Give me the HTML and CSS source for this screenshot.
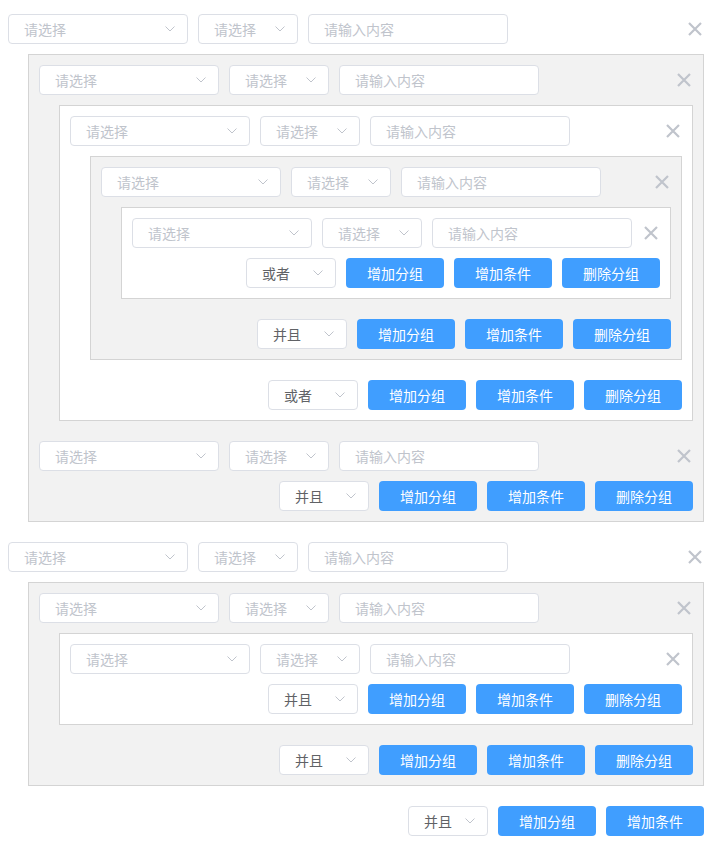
FILE: index.html
```html
<!DOCTYPE html>
<html lang="zh">
<head>
<meta charset="utf-8">
<title>条件分组</title>
<link rel="stylesheet" href="styles.css">
</head>
<body>
<svg width="0" height="0" class="defs">
  <defs>
    <symbol id="arrow" viewBox="0 0 10 6"><path d="M0.5 0.5 L5 5 L9.5 0.5" fill="none" stroke="#c0c4cc" stroke-width="1"/></symbol>
    <symbol id="close" viewBox="0 0 16 16"><path d="M2 2 L14 14 M14 2 L2 14" fill="none" stroke="#c0c4cc" stroke-width="2.2"/></symbol>
  </defs>
</svg>
<div class="root">
  <div class="cond">
    <div class="sel w180 ph"><span>请选择</span><svg class="arr"><use href="#arrow"/></svg></div>
    <div class="sel w100 ph"><span>请选择</span><svg class="arr"><use href="#arrow"/></svg></div>
    <div class="inp ph">请输入内容</div>
    <svg class="x"><use href="#close"/></svg>
  </div>

  <div class="group grey">
    <div class="cond">
      <div class="sel w180 ph"><span>请选择</span><svg class="arr"><use href="#arrow"/></svg></div>
      <div class="sel w100 ph"><span>请选择</span><svg class="arr"><use href="#arrow"/></svg></div>
      <div class="inp ph">请输入内容</div>
      <svg class="x"><use href="#close"/></svg>
    </div>
    <div class="group white">
      <div class="cond">
        <div class="sel w180 ph"><span>请选择</span><svg class="arr"><use href="#arrow"/></svg></div>
        <div class="sel w100 ph"><span>请选择</span><svg class="arr"><use href="#arrow"/></svg></div>
        <div class="inp ph">请输入内容</div>
        <svg class="x"><use href="#close"/></svg>
      </div>
      <div class="group grey">
        <div class="cond">
          <div class="sel w180 ph"><span>请选择</span><svg class="arr"><use href="#arrow"/></svg></div>
          <div class="sel w100 ph"><span>请选择</span><svg class="arr"><use href="#arrow"/></svg></div>
          <div class="inp ph">请输入内容</div>
          <svg class="x"><use href="#close"/></svg>
        </div>
        <div class="group white">
          <div class="cond">
            <div class="sel w180 ph"><span>请选择</span><svg class="arr"><use href="#arrow"/></svg></div>
            <div class="sel w100 ph"><span>请选择</span><svg class="arr"><use href="#arrow"/></svg></div>
            <div class="inp ph">请输入内容</div>
            <svg class="x"><use href="#close"/></svg>
          </div>
          <div class="actions">
            <div class="sel w90"><span>或者</span><svg class="arr"><use href="#arrow"/></svg></div>
            <button class="btn">增加分组</button>
            <button class="btn">增加条件</button>
            <button class="btn">删除分组</button>
          </div>
        </div>
        <div class="actions">
          <div class="sel w90"><span>并且</span><svg class="arr"><use href="#arrow"/></svg></div>
          <button class="btn">增加分组</button>
          <button class="btn">增加条件</button>
          <button class="btn">删除分组</button>
        </div>
      </div>
      <div class="actions">
        <div class="sel w90"><span>或者</span><svg class="arr"><use href="#arrow"/></svg></div>
        <button class="btn">增加分组</button>
        <button class="btn">增加条件</button>
        <button class="btn">删除分组</button>
      </div>
    </div>
    <div class="cond">
      <div class="sel w180 ph"><span>请选择</span><svg class="arr"><use href="#arrow"/></svg></div>
      <div class="sel w100 ph"><span>请选择</span><svg class="arr"><use href="#arrow"/></svg></div>
      <div class="inp ph">请输入内容</div>
      <svg class="x"><use href="#close"/></svg>
    </div>
    <div class="actions">
      <div class="sel w90"><span>并且</span><svg class="arr"><use href="#arrow"/></svg></div>
      <button class="btn">增加分组</button>
      <button class="btn">增加条件</button>
      <button class="btn">删除分组</button>
    </div>
  </div>

  <div class="cond">
    <div class="sel w180 ph"><span>请选择</span><svg class="arr"><use href="#arrow"/></svg></div>
    <div class="sel w100 ph"><span>请选择</span><svg class="arr"><use href="#arrow"/></svg></div>
    <div class="inp ph">请输入内容</div>
    <svg class="x"><use href="#close"/></svg>
  </div>

  <div class="group grey">
    <div class="cond">
      <div class="sel w180 ph"><span>请选择</span><svg class="arr"><use href="#arrow"/></svg></div>
      <div class="sel w100 ph"><span>请选择</span><svg class="arr"><use href="#arrow"/></svg></div>
      <div class="inp ph">请输入内容</div>
      <svg class="x"><use href="#close"/></svg>
    </div>
    <div class="group white">
      <div class="cond">
        <div class="sel w180 ph"><span>请选择</span><svg class="arr"><use href="#arrow"/></svg></div>
        <div class="sel w100 ph"><span>请选择</span><svg class="arr"><use href="#arrow"/></svg></div>
        <div class="inp ph">请输入内容</div>
        <svg class="x"><use href="#close"/></svg>
      </div>
      <div class="actions">
        <div class="sel w90"><span>并且</span><svg class="arr"><use href="#arrow"/></svg></div>
        <button class="btn">增加分组</button>
        <button class="btn">增加条件</button>
        <button class="btn">删除分组</button>
      </div>
    </div>
    <div class="actions">
      <div class="sel w90"><span>并且</span><svg class="arr"><use href="#arrow"/></svg></div>
      <button class="btn">增加分组</button>
      <button class="btn">增加条件</button>
      <button class="btn">删除分组</button>
    </div>
  </div>

  <div class="actions">
    <div class="sel w80"><span>并且</span><svg class="arr"><use href="#arrow"/></svg></div>
    <button class="btn">增加分组</button>
    <button class="btn">增加条件</button>
  </div>
</div>
</body>
</html>
```

FILE: styles.css
```css
* { box-sizing: border-box; }
html, body { margin: 0; padding: 0; background: #fff; }
body {
  font-family: "Noto Sans CJK SC", "Noto Sans", sans-serif;
  font-size: 14px;
  color: #606266;
}
.defs { position: absolute; width: 0; height: 0; overflow: hidden; }
.root { padding: 14px 18px 0 8px; }

.cond {
  display: flex;
  align-items: center;
  gap: 10px;
  height: 30px;
  margin-bottom: 10px;
}
.actions {
  display: flex;
  justify-content: flex-end;
  align-items: center;
  gap: 10px;
  height: 30px;
}

.sel, .inp {
  height: 30px;
  border: 1px solid #dcdfe6;
  border-radius: 4px;
  background: #fff;
  display: flex;
  align-items: center;
  padding-left: 15px;
  line-height: 28px;
}
.sel { justify-content: space-between; padding-right: 12px; }
.ph { color: #c0c4cc; }
.w180 { width: 180px; }
.w100 { width: 100px; }
.w90 { width: 90px; }
.w80 { width: 80px; }
.inp { width: 200px; }
.arr { width: 10px; height: 6px; flex: none; }

.x { width: 16px; height: 16px; margin-left: auto; margin-right: 1px; flex: none; }

.btn {
  width: 98px;
  height: 30px;
  border: none;
  border-radius: 4px;
  background: #409eff;
  color: #fff;
  font-family: inherit;
  font-size: 14px;
  padding: 0;
}

.group {
  margin-left: 20px;
  margin-bottom: 20px;
  padding: 10px;
  border: 1px solid #d4d4d4;
}
.grey { background: #f2f2f2; }
.white { background: #fff; }
```
